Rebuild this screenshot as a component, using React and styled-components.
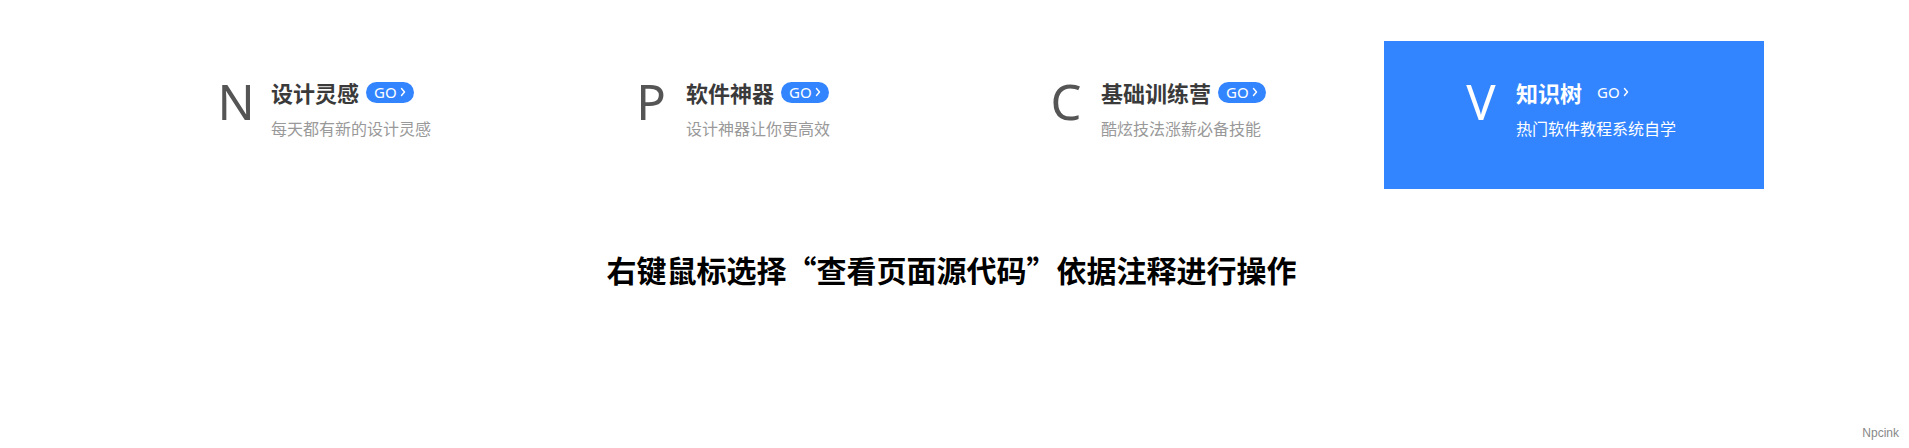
import React from 'react';
import styled, { createGlobalStyle } from 'styled-components';

const GlobalStyle = createGlobalStyle`
  html, body {
    margin: 0;
    padding: 0;
    background: #fff;
  }

  body {
    font-family: "Noto Sans", "Noto Sans CJK SC", sans-serif;
  }
`;

const Page = styled.div`
  min-height: 100vh;
  display: flex;
  flex-direction: column;
  padding-right: 6px;
  box-sizing: border-box;
`;

const CardRow = styled.div`
  display: flex;
  justify-content: center;
  gap: 35px;
  padding-top: 41px;
`;

const Card = styled.a`
  width: 380px;
  height: 148px;
  box-sizing: border-box;
  padding: 36px 0 0 66px;
  display: flex;
  align-items: flex-start;
  gap: 4px;
  text-decoration: none;
  background: ${(props) => (props.active ? '#3385ff' : '#fff')};
  color: ${(props) => (props.active ? '#fff' : '#333')};
  cursor: pointer;
`;

const Letter = styled.span`
  width: 62px;
  flex-shrink: 0;
  text-align: center;
  font-family: "Noto Sans", sans-serif;
  font-size: 49px;
  line-height: 1;
  font-weight: 400;
  color: ${(props) => (props.active ? '#fff' : '#555')};
`;

const Info = styled.div`
  display: flex;
  flex-direction: column;
`;

const TitleLine = styled.div`
  display: flex;
  align-items: center;
  height: 30px;
`;

const Title = styled.span`
  font-family: "Noto Sans CJK SC", sans-serif;
  font-size: 22px;
  line-height: 30px;
  font-weight: 700;
  color: ${(props) => (props.active ? '#fff' : '#3a3a3a')};
`;

const GoBadge = styled.span`
  margin-left: 7px;
  height: 21px;
  padding: 0 8px 0 8px;
  border-radius: 11px;
  display: inline-flex;
  align-items: center;
  gap: 3px;
  background: ${(props) => (props.active ? 'transparent' : '#3385ff')};
  color: #fff;
  font-family: "Noto Sans", sans-serif;
  font-size: 15px;
  line-height: 21px;
`;

const Subtitle = styled.span`
  margin-top: 9px;
  font-family: "Noto Sans CJK SC", sans-serif;
  font-size: 16px;
  line-height: 24px;
  color: ${(props) => (props.active ? '#fff' : '#999')};
`;

const Heading = styled.h2`
  margin: 60px 0 0;
  text-align: center;
  font-family: "Noto Sans CJK SC", sans-serif;
  font-size: 30px;
  line-height: 40px;
  font-weight: 700;
  color: #000;
`;

const Footer = styled.div`
  margin-top: auto;
  margin-right: -6px;
  padding: 0 10px 8px 0;
  text-align: right;
  font-family: "Liberation Sans", Arial, sans-serif;
  font-size: 12px;
  line-height: 14px;
  color: #888;
`;

const Chevron = () => (
  <svg width='6' height='10' viewBox='0 0 6 10' fill='none'>
    <polyline points='1.5,1.5 4.5,5 1.5,8.5' stroke='currentColor' strokeWidth='1.4' strokeLinecap='round' strokeLinejoin='round' />
  </svg>
);

const cards = [
  { letter: 'N', title: '设计灵感', desc: '每天都有新的设计灵感' },
  { letter: 'P', title: '软件神器', desc: '设计神器让你更高效' },
  { letter: 'C', title: '基础训练营', desc: '酷炫技法涨薪必备技能' },
  { letter: 'V', title: '知识树', desc: '热门软件教程系统自学', active: true },
];

const App = () => (
  <>
    <GlobalStyle />
    <Page>
      <CardRow>
        {cards.map((card) => (
          <Card key={card.letter} active={card.active}>
            <Letter active={card.active}>{card.letter}</Letter>
            <Info>
              <TitleLine>
                <Title active={card.active}>{card.title}</Title>
                <GoBadge active={card.active}>
                  GO
                  <Chevron />
                </GoBadge>
              </TitleLine>
              <Subtitle active={card.active}>{card.desc}</Subtitle>
            </Info>
          </Card>
        ))}
      </CardRow>
      <Heading>右键鼠标选择“查看页面源代码”依据注释进行操作</Heading>
      <Footer>Npcink</Footer>
    </Page>
  </>
);

export default App;
